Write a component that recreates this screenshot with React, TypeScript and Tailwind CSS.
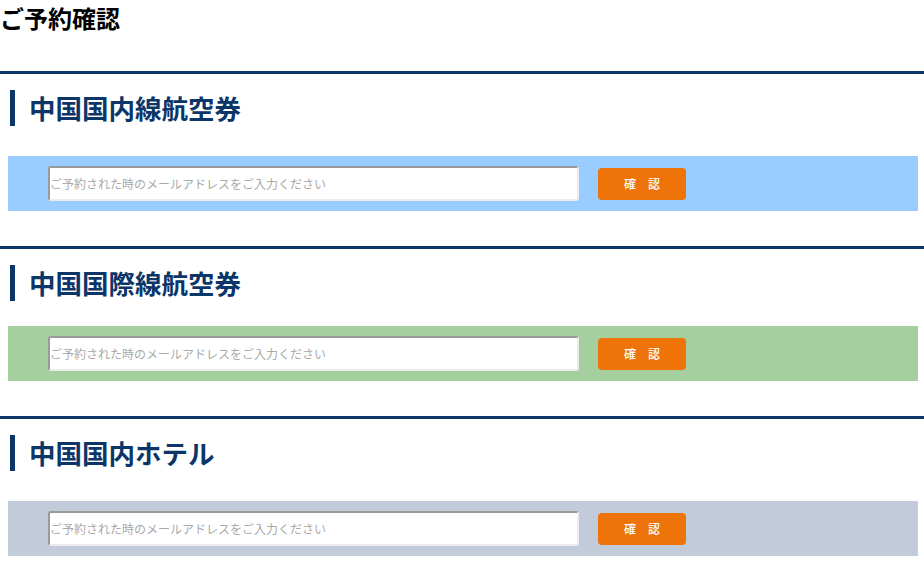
const sections = [
  { title: '中国国内線航空券', band: 'bg-[#99ccff]', gap: 'mt-[30px]' },
  { title: '中国国際線航空券', band: 'bg-[#a5cf9e]', gap: 'mt-[25px]' },
  { title: '中国国内ホテル', band: 'bg-[#c2cbd9]', gap: 'mt-[30px]' },
];

function App() {
  return (
    <div className="min-h-[566px] bg-white font-['Noto_Sans_CJK_JP','Noto_Sans',sans-serif]">
      <h1 className="mb-[35px] text-[24px] font-bold leading-[36px] text-black">ご予約確認</h1>
      {sections.map((s, idx) => (
        <section key={idx} className="mb-[35px] border-t-[3px] border-[#0d3668]">
          <h2 className="ml-[10px] mt-[16px] border-l-[5px] border-[#0d3668] pl-[14px] text-[26.5px] font-bold leading-[36px] text-[#0d3668]">
            {s.title}
          </h2>
          <div className={`${s.gap} ml-[8px] mr-[6px] flex h-[55px] items-center gap-[19px] pl-[40px] ${s.band}`}>
            <input
              type="text"
              placeholder="ご予約された時のメールアドレスをご入力ください"
              className="h-[35px] w-[531px] rounded-[3px] border-2 border-t-[#9a9a9a] border-l-[#9a9a9a] border-b-[#ececec] border-r-[#ececec] bg-white px-0 text-[12px] placeholder:text-[#a9a9a9] outline-none"
            />
            <button className="h-[32px] w-[88px] rounded-[4px] bg-[#ee7308] text-[12px] font-medium text-white">
              確　認
            </button>
          </div>
        </section>
      ))}
    </div>
  );
}

export default App;
